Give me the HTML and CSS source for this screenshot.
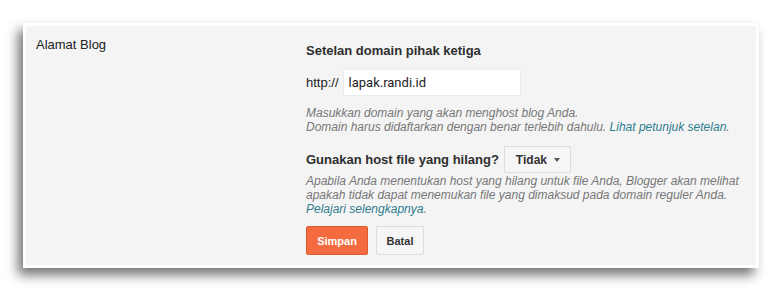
FILE: index.html
```html
<!DOCTYPE html>
<html lang="id">
<head>
<meta charset="utf-8">
<title>Alamat Blog</title>
<link rel="stylesheet" href="styles.css">
</head>
<body>
<div class="panel">
  <div class="grid">
    <div class="label">Alamat Blog</div>
    <div class="content">
      <div class="heading">Setelan domain pihak ketiga</div>
      <div class="url-row">
        <span class="prefix">http://</span>
        <input class="url-input" type="text" value="lapak.randi.id">
      </div>
      <div class="hint">Masukkan domain yang akan menghost blog Anda.<br>Domain harus didaftarkan dengan benar terlebih dahulu. <a class="link" href="#">Lihat petunjuk setelan</a>.</div>
      <div class="missing-row">
        <span class="heading">Gunakan host file yang hilang?</span>
        <button class="select" type="button">Tidak<span class="caret"></span></button>
      </div>
      <div class="hint desc">Apabila Anda menentukan host yang hilang untuk file Anda, Blogger akan melihat apakah tidak dapat menemukan file yang dimaksud pada domain reguler Anda. <a class="link" href="#">Pelajari selengkapnya</a>.</div>
      <div class="actions">
        <button class="btn btn-primary" type="button">Simpan</button>
        <button class="btn btn-default" type="button">Batal</button>
      </div>
    </div>
  </div>
</div>
</body>
</html>
```

FILE: styles.css
```css
html, body {
  margin: 0;
  padding: 0;
  background: #ffffff;
}

body {
  font-family: "Liberation Sans", Arial, sans-serif;
  color: #222222;
  min-height: 294px;
}

.panel {
  margin: 23px 0 0 23px;
  width: 730px;
  border: 3px solid #ffffff;
  background: #f4f4f4;
  box-shadow: -5px 7px 11px rgba(0, 0, 0, 0.55);
}

.grid {
  display: grid;
  grid-template-columns: 270px 440px;
  padding: 10px 10px 10px 10px;
}

.label {
  font-size: 13px;
  line-height: 15px;
  padding-top: 1px;
  color: #222222;
}

.content {
  display: flex;
  flex-direction: column;
  align-items: flex-start;
  padding-top: 7px;
}

.heading {
  font-size: 13px;
  line-height: 15px;
  font-weight: bold;
  color: #2e2e2e;
}

.url-row {
  display: flex;
  align-items: center;
  gap: 4px;
  margin-top: 11px;
}

.prefix {
  font-size: 13px;
  line-height: 15px;
  color: #222222;
}

.url-input {
  box-sizing: border-box;
  width: 178px;
  height: 27px;
  margin: 0;
  padding: 0 5px;
  border: 1px solid #ebebeb;
  background: #ffffff;
  font-family: Roboto, "Open Sans", sans-serif;
  font-size: 13px;
  color: #222222;
  outline: none;
}

.hint {
  margin-top: 10px;
  font-size: 12px;
  line-height: 14px;
  font-style: italic;
  color: #777777;
}

.link {
  color: #2f7d8f;
  text-decoration: none;
}

.missing-row {
  display: flex;
  align-items: center;
  gap: 5px;
  margin-top: 12px;
}

.select {
  box-sizing: border-box;
  display: flex;
  align-items: center;
  height: 27px;
  width: 67px;
  margin: 0;
  padding: 0 0 0 11px;
  border: 1px solid #dcdcdc;
  border-radius: 2px;
  background: #f6f6f6;
  font-family: "Liberation Sans", Arial, sans-serif;
  font-size: 12px;
  font-weight: bold;
  color: #333333;
}

.caret {
  width: 0;
  height: 0;
  margin-left: 7px;
  margin-top: 1px;
  border-left: 3.5px solid transparent;
  border-right: 3.5px solid transparent;
  border-top: 4px solid #555555;
}

.desc {
  margin-top: 1px;
}

.actions {
  display: flex;
  gap: 8px;
  margin-top: 10px;
}

.btn {
  box-sizing: border-box;
  height: 29px;
  margin: 0;
  border-radius: 2px;
  font-family: "Liberation Sans", Arial, sans-serif;
  font-size: 11px;
  font-weight: bold;
}

.btn-primary {
  width: 62px;
  padding: 0;
  background: #f36b3e;
  border: 1px solid #dc5a2e;
  color: #ffffff;
}

.btn-default {
  width: 48px;
  padding: 0;
  background: #f5f5f5;
  border: 1px solid #dcdcdc;
  color: #333333;
}
```
